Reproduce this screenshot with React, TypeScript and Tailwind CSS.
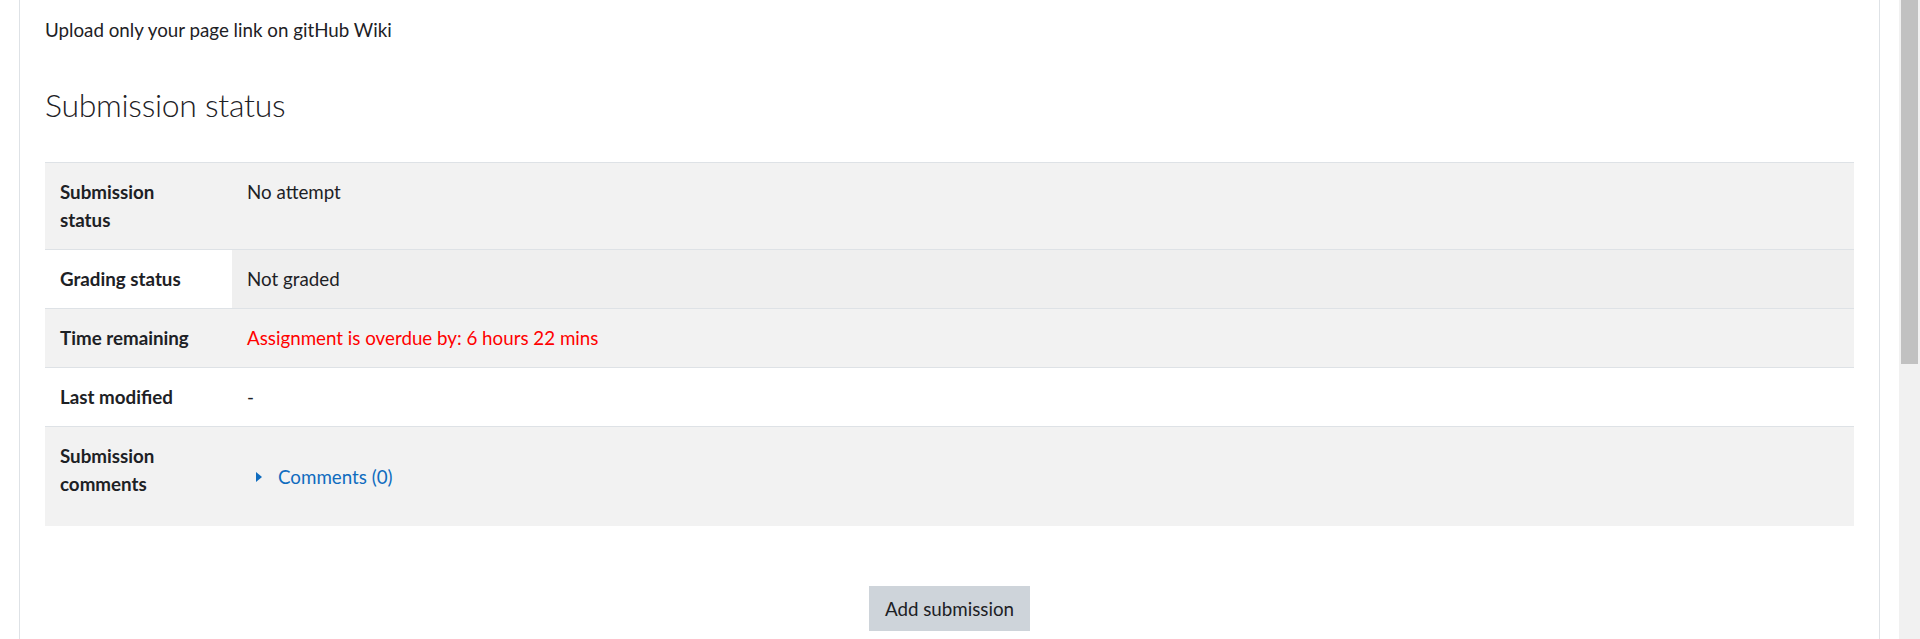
const rows = [
  { label: ["Submission", "status"], value: "No attempt", kind: "plain" },
  { label: ["Grading status"], value: "Not graded", kind: "notgraded" },
  { label: ["Time remaining"], value: "Assignment is overdue by: 6 hours 22 mins", kind: "overdue" },
  { label: ["Last modified"], value: "-", kind: "plain" },
  { label: ["Submission", "comments"], value: "Comments (0)", kind: "comments" },
];

function ValueCell({ kind, value }: { kind: string; value: string }) {
  if (kind === "overdue") return <span className="text-[#ff0000]">{value}</span>;
  if (kind === "comments")
    return (
      <div className="flex h-[69px] items-center">
        <svg width="12" height="12" viewBox="0 0 12 12" className="ml-[6px] mr-[13px]">
          <polygon points="3,1 9,6 3,11" fill="#0f6cbf" />
        </svg>
        <a href="#" className="text-[#0f6cbf]">
          {value}
        </a>
      </div>
    );
  return <span>{value}</span>;
}

export default function App() {
  return (
    <div
      className="flex h-[639px] w-full overflow-hidden bg-white text-[18.75px] leading-[28px] text-[#1d2125]"
      style={{ fontFamily: 'Lato, "Open Sans", sans-serif' }}
    >
      <div className="flex-1 px-[19px]">
        <div className="h-full border-x border-[#dee2e6] px-[25px] pt-[16px]">
          <p>Upload only your page link on gitHub Wiki</p>

          <h3 className="mt-[41px] mb-[38px] text-[32px] font-light leading-[1.23] tracking-[-0.3px]">
            Submission status
          </h3>

          <table className="w-full border-collapse">
            <tbody>
              {rows.map((row, i) => (
                <tr key={row.label.join(" ")} className={i % 2 === 0 ? "bg-[#f2f2f2]" : "bg-white"}>
                  <th className="w-[187px] border-t border-[#dee2e6] p-[15px] text-left align-top font-bold">
                    {row.label.map((line) => (
                      <div key={line}>{line}</div>
                    ))}
                  </th>
                  <td
                    className={
                      row.kind === "notgraded"
                        ? "border-t border-[#dee2e6] bg-[#efefef] p-[15px] align-top"
                        : "border-t border-[#dee2e6] p-[15px] align-top"
                    }
                  >
                    <ValueCell kind={row.kind} value={row.value} />
                  </td>
                </tr>
              ))}
            </tbody>
          </table>

          <div className="mt-[60px] flex justify-center">
            <button className="border border-[#ced4da] bg-[#ced4da] px-[15px] py-[7.5px] leading-[28px] text-[#1d2125]">
              Add submission
            </button>
          </div>
        </div>
      </div>

      {/* page scrollbar */}
      <div className="w-[21px] bg-[#f1f1f1] pl-[2px]">
        <div className="h-[364px] w-[17px] bg-[#c1c1c1]" />
      </div>
    </div>
  );
}
